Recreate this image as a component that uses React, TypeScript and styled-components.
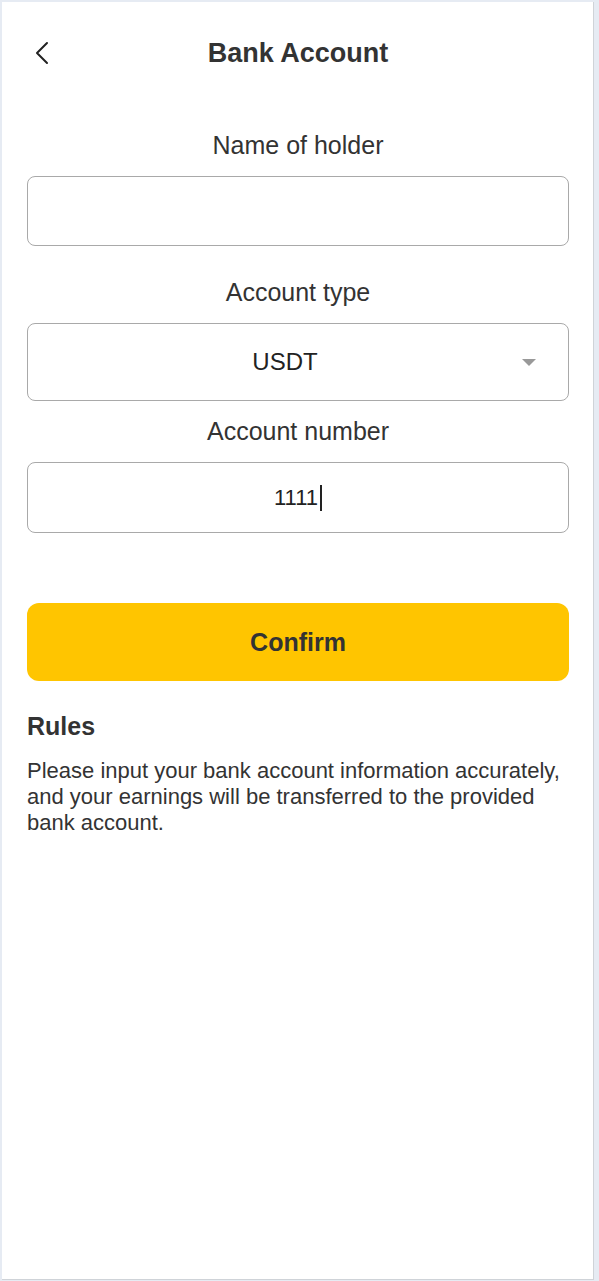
import React from "react";
import styled, { createGlobalStyle } from "styled-components";

const Global = createGlobalStyle`
  html, body { margin: 0; padding: 0; background: #e6ebf3; }
  body { font-family: "Liberation Sans", Arial, sans-serif; color: #333; }
  * { box-sizing: border-box; }
`;

const Page = styled.div`
  margin: 2px 5px 1px 2px;
  min-height: 1278px;
  background: #fff;
  border-right: 1px solid #cfd3d8;
  border-bottom: 1px solid #cfd3d8;
  display: flex;
  flex-direction: column;
  padding: 0 24px 0 25px;
`;

const Header = styled.header`
  height: 102px;
  display: grid;
  grid-template-columns: 40px 1fr 40px;
  align-items: center;
`;

const BackButton = styled.button`
  border: none;
  background: none;
  padding: 0 0 0 8px;
  display: flex;
  align-items: center;
  cursor: pointer;
  color: #222;
`;

const Title = styled.h1`
  margin: 0;
  text-align: center;
  font-size: 27px;
  font-weight: 700;
  color: #333;
`;

const Form = styled.div`
  display: flex;
  flex-direction: column;
`;

const Label = styled.div<{ $top: number }>`
  text-align: center;
  font-size: 25px;
  color: #333;
  line-height: 30px;
  margin-top: ${(p) => p.$top}px;
  margin-bottom: 16px;
`;

const Field = styled.div<{ $h: number }>`
  height: ${(p) => p.$h}px;
  border: 1px solid #a9a9a9;
  border-radius: 8px;
  display: flex;
  align-items: center;
  justify-content: center;
  position: relative;
  font-size: 22px;
  color: #222;
`;

const Caret = styled.span`
  display: inline-block;
  width: 2px;
  height: 26px;
  background: #222;
  margin-left: 2px;
`;

const SelectValue = styled.span`
  font-size: 24px;
  margin-right: 26px;
`;

const Arrow = styled.span`
  position: absolute;
  right: 32px;
  top: 50%;
  margin-top: -3px;
  width: 0;
  height: 0;
  border-left: 7px solid transparent;
  border-right: 7px solid transparent;
  border-top: 7px solid #999;
`;

const ConfirmButton = styled.button`
  margin-top: 70px;
  height: 78px;
  border: none;
  border-radius: 12px;
  background: #ffc500;
  font-family: "Liberation Sans", Arial, sans-serif;
  font-size: 25px;
  font-weight: 700;
  color: #333;
  cursor: pointer;
`;

const RulesTitle = styled.h2`
  margin: 31px 0 0;
  font-size: 25px;
  line-height: 28px;
  font-weight: 700;
  color: #333;
`;

const RulesText = styled.p`
  margin: 18px 0 0;
  font-size: 22px;
  line-height: 26px;
  color: #333;
`;

export default function App() {
  return (
    <>
      <Global />
      <Page>
        <Header>
          <BackButton aria-label="Back">
            <svg width="14" height="24" viewBox="0 0 14 24" fill="none">
              <path d="M12 2 L2 12 L12 22" stroke="#222" strokeWidth="2" strokeLinecap="round" strokeLinejoin="round" />
            </svg>
          </BackButton>
          <Title>Bank Account</Title>
          <span />
        </Header>
        <Form>
          <Label $top={26}>Name of holder</Label>
          <Field $h={70} />
          <Label $top={31}>Account type</Label>
          <Field $h={78}>
            <SelectValue>USDT</SelectValue>
            <Arrow />
          </Field>
          <Label $top={15}>Account number</Label>
          <Field $h={71}>
            1111<Caret />
          </Field>
        </Form>
        <ConfirmButton>Confirm</ConfirmButton>
        <RulesTitle>Rules</RulesTitle>
        <RulesText>
          Please input your bank account information accurately, and your earnings will be transferred to the provided bank account.
        </RulesText>
      </Page>
    </>
  );
}
